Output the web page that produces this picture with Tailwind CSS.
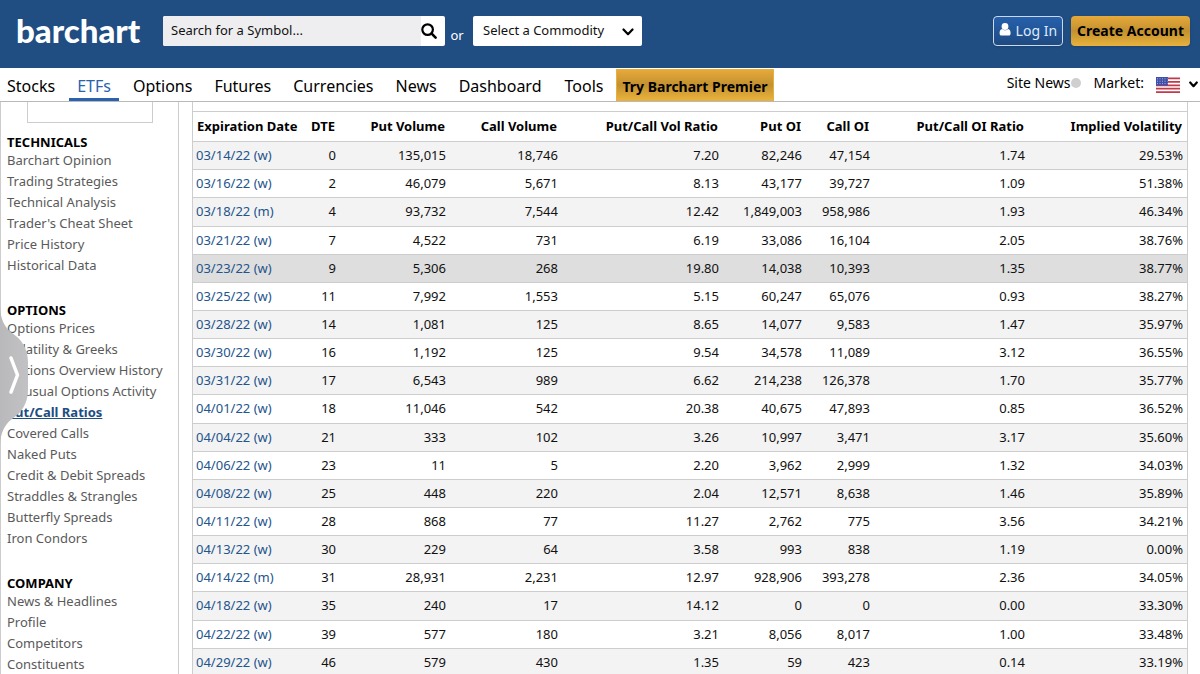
<!DOCTYPE html>
<html lang="en">
<head>
<meta charset="utf-8">
<meta name="viewport" content="width=device-width, initial-scale=1">
<title>Put/Call Ratios - Barchart</title>
<script src="https://cdn.jsdelivr.net/npm/@tailwindcss/browser@4"></script>
</head>
<body class="flex h-screen flex-col overflow-hidden bg-white font-['Noto_Sans',sans-serif] text-black">
<header class="flex h-[68px] shrink-0 items-start bg-[#204d82] pr-[10px] pl-4">
  <a href="#" class="mt-2 w-[147px] font-['Lato',sans-serif] text-[33px] leading-[44px] font-black text-white">barchart</a>
  <form class="mt-4 flex items-start">
    <div class="flex h-[30px] w-[282px] overflow-hidden rounded-xs bg-white">
      <input type="text" aria-label="Search for a symbol" placeholder="Search for a Symbol..." class="min-w-0 flex-1 bg-[#eeeef0] px-2 text-[13px] text-black outline-none placeholder:text-[#111]">
      <button type="submit" aria-label="Search" class="flex w-6 items-center justify-start">
        <svg class="h-4 w-4" viewBox="0 0 16 16" fill="none" stroke="#000" stroke-linecap="round"><circle cx="6.6" cy="6.6" r="5.3" stroke-width="2.2"/><path d="M10.7 10.7l3.9 3.9" stroke-width="2.6"/></svg>
      </button>
    </div>
    <span class="mt-[10px] w-7 pr-1 text-center text-[13px] text-white">or</span>
    <div class="relative">
      <select aria-label="Select a Commodity" class="h-[30px] w-[169px] appearance-none rounded-xs bg-white pr-6 pl-[10px] text-[13px] text-[#111]"><option>Select a Commodity</option></select>
      <svg class="pointer-events-none absolute top-3 right-2 h-2 w-3" viewBox="0 0 12 8" fill="none" stroke="#000" stroke-width="2.2" stroke-linecap="round" stroke-linejoin="round"><path d="M1.5 1.5L6 6.2l4.500-4.700"/></svg>
    </div>
  </form>
  <div class="mt-4 ml-auto flex gap-2">
    <button class="flex h-[30px] items-center gap-1 rounded-sm border border-[#c9daf0] bg-linear-to-b from-[#2660ad] to-[#1f4a80] px-[5px] text-sm text-[#dcebff] shadow-sm">
      <svg class="mb-1 h-[13px] w-[13px]" viewBox="0 0 13 13" fill="#fff"><circle cx="6" cy="3.500" r="3.400"/><path d="M3.200 5.900C1.200 6.200.6 8 .6 10.200c0 1.500.7 2.300 1.900 2.300h7.200c1.200 0 1.900-.8 1.900-2.300C11.600 8 11 6.200 9 5.900 7.600 7.600 4.600 7.600 3.200 5.900z"/></svg>
      Log In
    </button>
    <button class="h-[30px] rounded-sm bg-linear-to-b from-[#e6a93a] via-[#c39130] to-[#e9b23c] px-[6px] text-sm font-bold shadow-sm">Create Account</button>
  </div>
</header>
<nav class="flex h-[34px] shrink-0 items-stretch border-b border-[#b9b9b9] text-base leading-[36px] whitespace-nowrap">
  <a href="#" class="px-[7px]">Stocks</a>
  <a href="#" class="ml-[7px] border-b-3 border-[#2b62ae] px-2 text-[#2b62ae]">ETFs</a>
  <a href="#" class="ml-[7px] px-[7px]">Options</a>
  <a href="#" class="ml-2 px-[7px]">Futures</a>
  <a href="#" class="ml-2 px-[7px]">Currencies</a>
  <a href="#" class="ml-2 px-[7px]">News</a>
  <a href="#" class="ml-2 px-[7px]">Dashboard</a>
  <a href="#" class="ml-[9px] px-[7px]">Tools</a>
  <a href="#" class="mt-px ml-[6px] border border-[#e5b040] bg-linear-to-b from-[#e6a93a] via-[#c39130] to-[#e9b23c] px-[5px] text-sm leading-[34px] font-bold">Try Barchart Premier</a>
  <div class="mr-[2px] ml-auto flex h-[30px] items-center text-sm">
    <a href="#">Site News</a>
    <span class="ml-px h-[10px] w-[10px] rounded-full bg-[#cfcfcf]"></span>
    <span class="ml-3">Market:</span>
    <button aria-label="Choose market" class="ml-3 flex items-center gap-[9px]">
      <svg class="mt-1 h-4 w-6" viewBox="0 0 24 16"><path fill="#fff" d="M0 0h24v16H0z"/><path stroke="#c03a4c" stroke-width="1.700" d="M0 1.300h24M0 4.800h24M0 8.300h24M0 11.700h24M0 15.200h24"/><path fill="#3f4fa8" d="M0 0h12v8.500H0z"/><path stroke="#a9b3e6" stroke-dasharray="1 1.500" d="M1 1.800h10.500M1 4.200h10.500M1 6.600h10.500"/></svg>
      <svg class="mt-[3px] h-[7px] w-[9px]" viewBox="0 0 9 7" fill="none" stroke="#000" stroke-width="2.200" stroke-linecap="round" stroke-linejoin="round"><path d="M1.200 1.500l3.300 3.700 3.300-3.700"/></svg>
    </button>
  </div>
</nav>
<div class="relative flex min-h-0 flex-1 overflow-hidden">
  <aside class="w-[179px] shrink-0 border-x border-[#cdcdcd] pl-[6px] text-[13px] leading-[21px] whitespace-nowrap text-[#5a5a5a]">
    <div class="ml-5 h-[21px] w-[126px] border border-t-0 border-[#cdcdcd]"></div>
    <section class="mt-3">
      <h2 class="leading-[15px] font-bold text-black">TECHNICALS</h2>
      <ul>
        <li><a href="#">Barchart Opinion</a></li>
        <li><a href="#">Trading Strategies</a></li>
        <li><a href="#">Technical Analysis</a></li>
        <li><a href="#">Trader's Cheat Sheet</a></li>
        <li><a href="#">Price History</a></li>
        <li><a href="#">Historical Data</a></li>
      </ul>
    </section>
    <section class="mt-[27px]">
      <h2 class="leading-[15px] font-bold text-black">OPTIONS</h2>
      <ul>
        <li><a href="#">Options Prices</a></li>
        <li><a href="#">Volatility &amp; Greeks</a></li>
        <li><a href="#">Options Overview History</a></li>
        <li><a href="#">Unusual Options Activity</a></li>
        <li><a href="#" class="font-bold text-[#204d82] underline">Put/Call Ratios</a></li>
        <li><a href="#">Covered Calls</a></li>
        <li><a href="#">Naked Puts</a></li>
        <li><a href="#">Credit &amp; Debit Spreads</a></li>
        <li><a href="#">Straddles &amp; Strangles</a></li>
        <li><a href="#">Butterfly Spreads</a></li>
        <li><a href="#">Iron Condors</a></li>
      </ul>
    </section>
    <section class="mt-[27px]">
      <h2 class="leading-[15px] font-bold text-black">COMPANY</h2>
      <ul>
        <li><a href="#">News &amp; Headlines</a></li>
        <li><a href="#">Profile</a></li>
        <li><a href="#">Competitors</a></li>
        <li><a href="#">Constituents</a></li>
      </ul>
    </section>
  </aside>
  <button aria-label="Open side panel" class="absolute top-[206px] left-0">
    <svg class="h-[136px] w-7" viewBox="0 0 28 136"><defs><linearGradient id="tab" x1="0" x2="1" y1="0" y2="0"><stop offset="0" stop-color="#b9b9bb"/><stop offset="1" stop-color="#c2c2c4"/></linearGradient></defs><path fill="url(#tab)" d="M0 0C1 11 4 19 12 25c9 6 16 15 16 29v28c0 14-7 23-16 29C4 117 1 125 0 136z"/><path d="M11 50l6.500 17L11 84" fill="none" stroke="#fff" stroke-width="3.500" stroke-linecap="round" stroke-linejoin="round"/></svg>
  </button>
  <main class="mr-3 ml-[13px] min-w-0 flex-1 border-x border-[#cdcdcd] pt-[9px]">
    <table class="w-full table-fixed border-collapse text-right text-[13px] whitespace-nowrap">
      <colgroup>
        <col class="w-[112px]"><col class="w-[35px]"><col class="w-[110px]"><col class="w-[112px]"><col class="w-[161px]"><col class="w-[83px]"><col class="w-[68px]"><col class="w-[155px]"><col class="w-[158px]">
      </colgroup>
      <thead class="border-y border-[#cdcdcd]">
        <tr class="h-[30px] *:p-0 *:pr-[5px] *:font-bold">
          <th scope="col"><span class="block pl-1 text-left">Expiration Date</span></th><th scope="col">DTE</th><th scope="col">Put Volume</th><th scope="col">Call Volume</th><th scope="col">Put/Call Vol Ratio</th><th scope="col">Put OI</th><th scope="col">Call OI</th><th scope="col">Put/Call OI Ratio</th><th scope="col">Implied Volatility</th>
        </tr>
      </thead>
      <tbody id="rows" class="text-[#111] [&>tr:nth-child(7n+3)]:h-[29px]"></tbody>
    </table>
  </main>
</div>
<script>
const data = `03/14/22 (w)|0|135,015|18,746|7.20|82,246|47,154|1.74|29.53%
03/16/22 (w)|2|46,079|5,671|8.13|43,177|39,727|1.09|51.38%
03/18/22 (m)|4|93,732|7,544|12.42|1,849,003|958,986|1.93|46.34%
03/21/22 (w)|7|4,522|731|6.19|33,086|16,104|2.05|38.76%
03/23/22 (w)|9|5,306|268|19.80|14,038|10,393|1.35|38.77%
03/25/22 (w)|11|7,992|1,553|5.15|60,247|65,076|0.93|38.27%
03/28/22 (w)|14|1,081|125|8.65|14,077|9,583|1.47|35.97%
03/30/22 (w)|16|1,192|125|9.54|34,578|11,089|3.12|36.55%
03/31/22 (w)|17|6,543|989|6.62|214,238|126,378|1.70|35.77%
04/01/22 (w)|18|11,046|542|20.38|40,675|47,893|0.85|36.52%
04/04/22 (w)|21|333|102|3.26|10,997|3,471|3.17|35.60%
04/06/22 (w)|23|11|5|2.20|3,962|2,999|1.32|34.03%
04/08/22 (w)|25|448|220|2.04|12,571|8,638|1.46|35.89%
04/11/22 (w)|28|868|77|11.27|2,762|775|3.56|34.21%
04/13/22 (w)|30|229|64|3.58|993|838|1.19|0.00%
04/14/22 (m)|31|28,931|2,231|12.97|928,906|393,278|2.36|34.05%
04/18/22 (w)|35|240|17|14.12|0|0|0.00|33.30%
04/22/22 (w)|39|577|180|3.21|8,056|8,017|1.00|33.48%
04/29/22 (w)|46|579|430|1.35|59|423|0.14|33.19%`;
const body = document.getElementById('rows');
data.split('\n').forEach((line, i) => {
  const [date, ...cells] = line.split('|');
  const tr = document.createElement('tr');
  tr.className = i === 4
    ? 'h-7 border-b border-[#cdcdcd] bg-[#dedede] *:p-0 *:pr-1'
    : 'h-7 border-b border-[#cdcdcd] odd:bg-[#f3f3f3] *:p-0 *:pr-1';
  tr.innerHTML = '<td><a href="#" class="block pl-[3px] text-left text-[#24548c]">' + date + '</a></td>' +
    cells.map(c => '<td>' + c + '</td>').join('');
  body.append(tr);
});
</script>
</body>
</html>
